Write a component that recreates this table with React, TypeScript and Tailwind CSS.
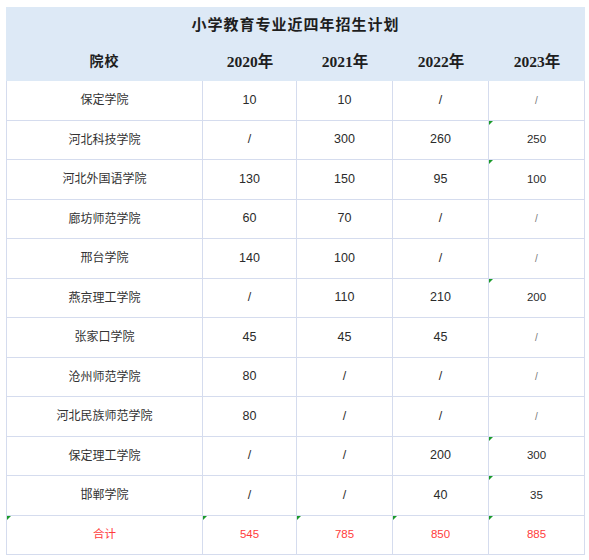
const rows: string[][] = [
  ["保定学院", "10", "10", "/", "/"],
  ["河北科技学院", "/", "300", "260", "250"],
  ["河北外国语学院", "130", "150", "95", "100"],
  ["廊坊师范学院", "60", "70", "/", "/"],
  ["邢台学院", "140", "100", "/", "/"],
  ["燕京理工学院", "/", "110", "210", "200"],
  ["张家口学院", "45", "45", "45", "/"],
  ["沧州师范学院", "80", "/", "/", "/"],
  ["河北民族师范学院", "80", "/", "/", "/"],
  ["保定理工学院", "/", "/", "200", "300"],
  ["邯郸学院", "/", "/", "40", "35"],
];

// rows whose 2023 cell carries the little green comment mark
const marked = [1, 2, 5, 9, 10];

const serif = "font-['Liberation_Serif','Noto_Sans_CJK_SC',serif]";
const sans = "font-['Liberation_Sans','Noto_Sans_CJK_SC',sans-serif]";

function Mark() {
  return (
    <span className="absolute left-0 top-0 w-0 h-0 border-t-[4px] border-r-[4px] border-t-[#1a9a2a] border-r-transparent" />
  );
}

function Cell({
  text,
  col,
  mark,
  red,
}: {
  text: string;
  col: number;
  mark?: boolean;
  red?: boolean;
}) {
  const last = col === 4;
  const slash = text === "/";
  let cls = "text-[12.5px] text-[#2b2b2b]";
  if (col === 0) cls = "text-[12px] text-[#333]";
  if (last) cls = slash ? "text-[10px] text-[#777]" : "text-[11.5px] text-[#2b2b2b]";
  if (red) cls = "text-[11.5px] text-[#ff3c3c]";
  return (
    <div
      className={`relative flex items-center justify-center h-[39.5px] border-b border-r border-[#d5dcee] ${
        col === 0 ? "border-l" : ""
      } ${cls}`}
    >
      {mark && <Mark />}
      {text}
    </div>
  );
}

export default function App() {
  return (
    <div className={`w-[589px] h-[560px] bg-white pt-[7px] pl-[6px] ${sans}`}>
      <div className="w-[579px]">
        <div className="bg-[#dde9f6]">
          <div
            className={`h-[35px] pt-[1px] flex items-center justify-center text-[15px] font-bold text-[#1e1e1e] tracking-[1px] ${serif}`}
          >
            小学教育专业近四年招生计划
          </div>
          <div
            className={`grid grid-cols-[197px_94px_96px_96px_96px] h-[39px] items-center text-center text-[15.5px] font-bold text-[#1e1e1e] ${serif}`}
          >
            <div className="text-[14px] tracking-[1px]">院校</div>
            <div>2020年</div>
            <div>2021年</div>
            <div>2022年</div>
            <div>2023年</div>
          </div>
        </div>
        <div className="grid grid-cols-[197px_94px_96px_96px_96px]">
          {rows.map((r, i) =>
            r.map((t, c) => (
              <Cell
                key={`${i}-${c}`}
                text={t}
                col={c}
                mark={c === 4 && marked.includes(i)}
              />
            ))
          )}
          {["合计", "545", "785", "850", "885"].map((t, c) => (
            <Cell key={`t-${c}`} text={t} col={c} mark red />
          ))}
        </div>
      </div>
    </div>
  );
}
